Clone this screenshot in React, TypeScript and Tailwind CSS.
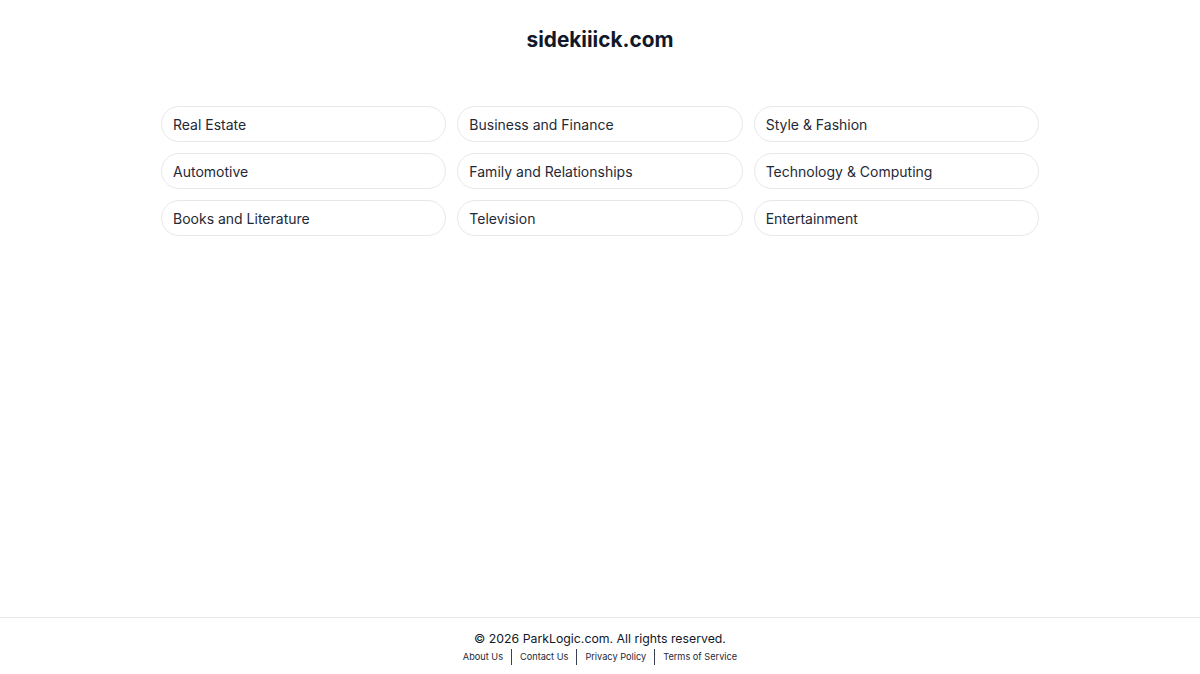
const categories = [
  'Real Estate',
  'Business and Finance',
  'Style & Fashion',
  'Automotive',
  'Family and Relationships',
  'Technology & Computing',
  'Books and Literature',
  'Television',
  'Entertainment',
];

const links = ['About Us', 'Contact Us', 'Privacy Policy', 'Terms of Service'];

export default function App() {
  return (
    <div className="min-h-screen flex flex-col bg-white text-[#111827]" style={{ fontFamily: 'Inter, "Noto Sans", sans-serif' }}>
      <main className="flex-1">
        <h1 className="text-center text-[20.8px] font-bold pt-[26px] leading-[28px]">sidekiiick.com</h1>
        <div className="mx-auto mt-[52px] w-[878px] grid grid-cols-3 gap-x-[11px] gap-y-[11px]">
          {categories.map(c => (
            <a
              key={c}
              href="#"
              className="h-[36px] flex items-center px-[11px] rounded-full border border-[#e5e7eb] text-[14px] text-[#1f2937]"
            >
              {c}
            </a>
          ))}
        </div>
      </main>
      <footer className="border-t border-[#e5e7eb] h-[57px] flex flex-col items-center pt-[13px]">
        <p className="text-[12.3px] leading-[16px] text-[#111827]">© 2026 ParkLogic.com. All rights reserved.</p>
        <div className="flex items-center text-[9.2px] leading-[14px] text-[#1f2937] mt-[2px]">
          {links.map((l, i) => (
            <div key={l} className="flex items-center">
              {i > 0 && <span className="mx-[8px] w-px h-[16px] bg-[#374151]" />}
              <a href="#">{l}</a>
            </div>
          ))}
        </div>
      </footer>
    </div>
  );
}
